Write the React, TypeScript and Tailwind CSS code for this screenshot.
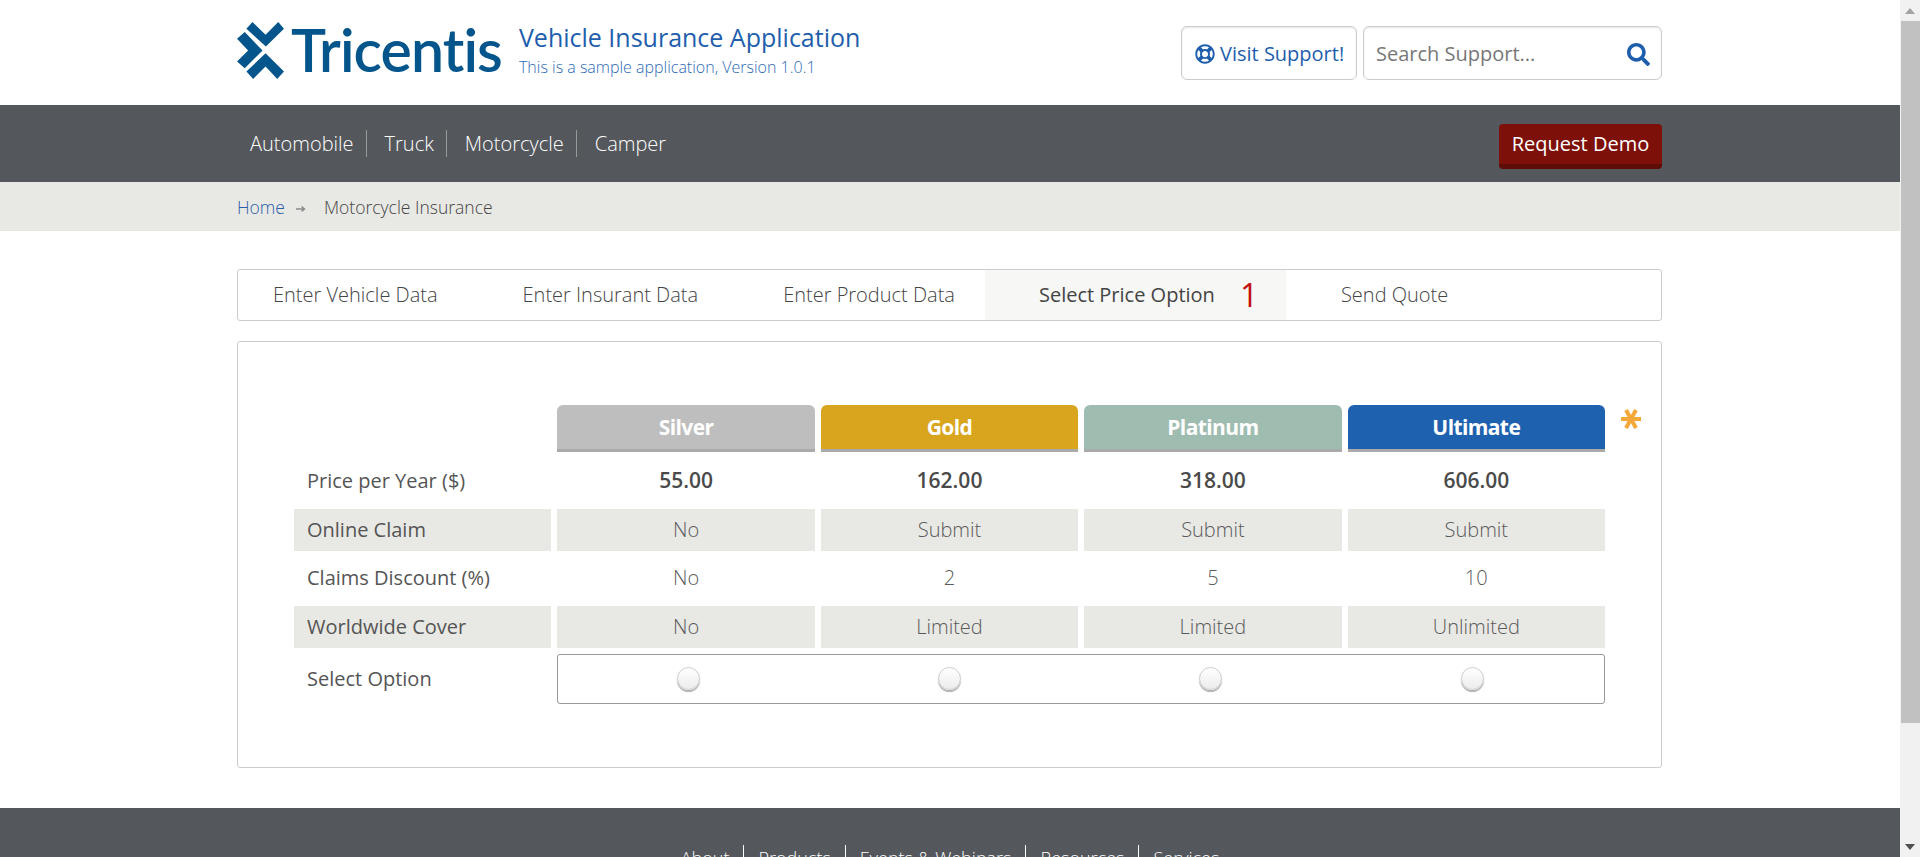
import React from 'react';
import { FaRegLifeRing, FaSearch } from 'react-icons/fa';

const plans = ['Silver', 'Gold', 'Platinum', 'Ultimate'];
const planColors = ['bg-[#bebebe]', 'bg-[#d9a41e]', 'bg-[#9fbcb0]', 'bg-[#1e61af]'];
const prices = ['55.00', '162.00', '318.00', '606.00'];

const rows = [
  { label: 'Online Claim', values: ['No', 'Submit', 'Submit', 'Submit'], shaded: true, height: 'h-[42px]' },
  { label: 'Claims Discount (%)', values: ['No', '2', '5', '10'], shaded: false, height: 'h-[43px] pb-[2px]' },
  { label: 'Worldwide Cover', values: ['No', 'Limited', 'Limited', 'Unlimited'], shaded: true, height: 'h-[42px]' },
];

const navItems = ['Automobile', 'Truck', 'Motorcycle', 'Camper'];
const footerItems = ['About', 'Products', 'Events & Webinars', 'Resources', 'Services'];

const LogoMark = () => (
  <svg width="47" height="57" viewBox="12 12 140 170" className="shrink-0">
    <path
      fill="#03558c"
      d="M58 12 L97 50 L135 12 L152 32 L98 85 L40 32 Z M12 62 L35 42 L88 97 L35 150 L12 130 L45 97 Z M97 105 L152 160 L132 182 L97 145 L60 182 L40 160 Z"
    />
  </svg>
);

const Asterisk = () => (
  <svg width="20" height="22" viewBox="0 0 20 22" className="shrink-0">
    <g stroke="#f5a83a" strokeWidth="4" strokeLinecap="butt">
      <line x1="0" y1="11" x2="20" y2="11" />
      <line x1="5" y1="2" x2="15" y2="20" />
      <line x1="15" y1="2" x2="5" y2="20" />
    </g>
  </svg>
);

const BreadcrumbArrow = () => (
  <svg width="10" height="8" viewBox="0 0 10 8" className="ml-[11px] mr-[18px] mt-[3px] shrink-0">
    <path fill="none" stroke="#8a8a8a" strokeWidth="1.5" d="M0 4 H8 M5.5 1.5 L8.5 4 L5.5 6.5" />
  </svg>
);

const Scrollbar = () => (
  <div className="w-[20px] shrink-0 h-full bg-[#f1f1f1] flex flex-col">
    <div className="h-[21px] flex items-center justify-center">
      <div className="w-0 h-0 border-x-[5px] border-x-transparent border-b-[6px] border-b-[#a3a3a3]" />
    </div>
    <div className="h-[702px] ml-[1px] bg-[#c1c1c1]" />
    <div className="flex-1 flex items-end justify-center pb-[7px]">
      <div className="w-0 h-0 border-x-[5px] border-x-transparent border-t-[6px] border-t-[#505050]" />
    </div>
  </div>
);

export default function App() {
  return (
    <div className="flex h-[857px] overflow-hidden bg-white font-['Open_Sans',sans-serif] text-[20px] text-[#444]">
      <div className="flex-1 min-w-0 h-full overflow-hidden">
        {/* Header */}
        <header className="h-[105px] pl-[237px] pr-[238px] flex">
          <div className="pt-[22px] shrink-0">
            <LogoMark />
          </div>
          <div className="ml-[7px] mt-[15px] font-['Lato',sans-serif] font-semibold text-[59px] leading-[70px] tracking-[-0.9px] text-[#03558c]">
            Tricentis
          </div>
          <div className="ml-[17px] pt-[20px]">
            <div className="text-[25px] leading-[34px] text-[#1e5ead]">Vehicle Insurance Application</div>
            <div className="text-[16px] leading-[24px] mt-[1px] font-light text-[#2e6ab8]">
              This is a sample application, Version 1.0.1
            </div>
          </div>
          <div className="ml-auto mt-[26px] flex gap-[6px] h-[54px]">
            <div className="w-[176px] flex items-center gap-[5px] pl-[13px] pt-[2px] rounded-[6px] border border-[#ccc] shadow-[inset_0_1px_2px_rgba(0,0,0,0.1)] text-[#1e5ead]">
              <FaRegLifeRing className="w-[20px] h-[20px]" />
              <span>Visit Support!</span>
            </div>
            <div className="w-[299px] flex items-center justify-between pl-[12px] pr-[11px] pt-[2px] rounded-[6px] border border-[#ccc] shadow-[inset_0_1px_2px_rgba(0,0,0,0.1)]">
              <span className="text-[#777]">Search Support...</span>
              <FaSearch className="w-[23px] h-[23px] text-[#1e5ead]" />
            </div>
          </div>
        </header>

        {/* Main nav */}
        <nav className="h-[77px] bg-[#54575c] pl-[237px] pr-[238px] flex items-start justify-between">
          <ul className="flex items-center h-full font-light text-white">
            {navItems.map((item, i) => (
              <li key={item} className={`h-[27px] flex items-center pr-[12px] ${i === 0 ? 'pl-[13px]' : 'pl-[18px]'} ${i < navItems.length - 1 ? 'border-r border-[#999]' : ''}`}>
                {item}
              </li>
            ))}
          </ul>
          <div className="mt-[19px] w-[163px] h-[45px] flex items-center justify-center rounded-[4px] bg-[#7d1008] border-b-[5px] border-[#5d0c06] text-white">
            Request Demo
          </div>
        </nav>

        {/* Breadcrumb */}
        <div className="h-[49px] bg-[#e8e8e4] pl-[237px] pt-[2px] flex items-center text-[17.5px] font-light">
          <span className="text-[#2b5ea8]">Home</span>
          <BreadcrumbArrow />
          <span>Motorcycle Insurance</span>
        </div>

        {/* Wizard steps */}
        <div className="ml-[237px] w-[1425px] mt-[38px] h-[52px] flex rounded-[3px] border border-[#ccc] font-light">
          <div className="pl-[35px] pr-[30px] flex items-center">Enter Vehicle Data</div>
          <div className="pl-[55px] pr-[30px] flex items-center">Enter Insurant Data</div>
          <div className="pl-[55px] pr-[30px] flex items-center">Enter Product Data</div>
          <div className="w-[301px] pl-[54px] flex items-center bg-[#f7f7f5] font-medium">
            Select Price Option
            <span className="ml-[25px] text-[32px] leading-none font-normal text-[#c40f0f]">1</span>
          </div>
          <div className="pl-[55px] flex items-center">Send Quote</div>
        </div>

        {/* Price table */}
        <div className="ml-[237px] w-[1425px] mt-[20px] pt-[63px] pb-[63px] pl-[56px] flex rounded-[3px] border border-[#ccc]">
          <div className="w-[1311px] shrink-0 grid grid-cols-5 gap-[6px] font-light text-[#5a5a5a]">
            <div />
            {plans.map((plan, i) => (
              <div key={plan} className={`h-[47px] pt-[2px] flex items-center justify-center rounded-t-[6px] border-b-[3px] border-[#aaa] text-[21px] font-bold tracking-[-0.6px] text-white ${planColors[i]}`}>
                {plan}
              </div>
            ))}

            <div className="h-[45px] flex items-center pl-[13px] font-normal text-[#555]">Price per Year ($)</div>
            {prices.map((price) => (
              <div key={price} className="h-[45px] flex items-center justify-center text-[21px] font-semibold text-[#4a4a4a]">
                {price}
              </div>
            ))}

            {rows.map((row) => (
              <React.Fragment key={row.label}>
                <div className={`${row.height} flex items-center pl-[13px] font-normal text-[#555] ${row.shaded ? 'bg-[#e8e8e4]' : ''}`}>{row.label}</div>
                {row.values.map((value, i) => (
                  <div key={i} className={`${row.height} flex items-center justify-center ${row.shaded ? 'bg-[#e8e8e4]' : ''}`}>
                    {value}
                  </div>
                ))}
              </React.Fragment>
            ))}

            <div className="h-[50px] flex items-center pl-[13px] font-normal text-[#555]">Select Option</div>
            <div className="col-span-4 h-[50px] grid grid-cols-4 rounded-[3px] border border-[#999]">
              {plans.map((plan) => (
                <div key={plan} className="flex items-center justify-center pr-[2px] pb-[1px]">
                  <div className="w-[23px] h-[23px] rounded-full border border-[#ccc] bg-gradient-to-b from-white to-[#ececec] shadow-[0_2px_1px_rgba(0,0,0,0.3)]" />
                </div>
              ))}
            </div>
          </div>
          <div className="ml-[16px] mt-[3px]">
            <Asterisk />
          </div>
        </div>

        {/* Footer */}
        <footer className="mt-[40px] h-[300px] bg-[#54575c] pt-[37px] flex justify-center">
          <ul className="flex items-start text-[18px] font-light text-white">
            {footerItems.map((item, i) => (
              <li key={item} className={`h-[27px] flex items-center px-[14px] ${i < footerItems.length - 1 ? 'border-r border-white' : ''}`}>
                {item}
              </li>
            ))}
          </ul>
        </footer>
      </div>
      <Scrollbar />
    </div>
  );
}
